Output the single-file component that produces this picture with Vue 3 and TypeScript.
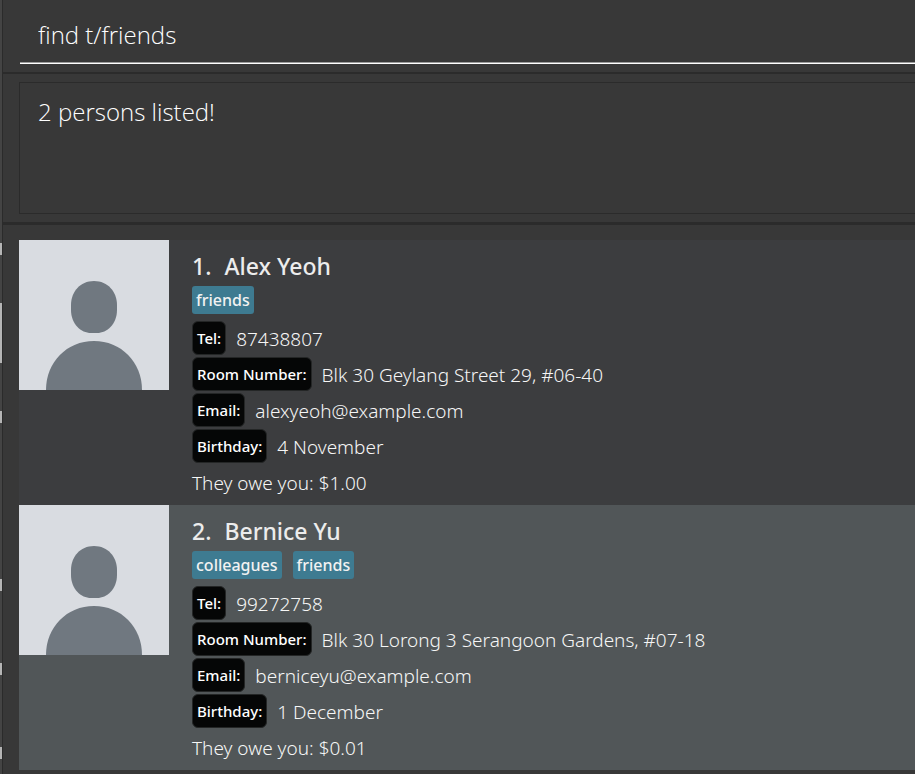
<script setup lang="ts">
import { ref } from 'vue'

interface Field {
  label: string
  value: string
}

interface Person {
  name: string
  tags: string[]
  fields: Field[]
  debt: string
}

const command = ref('find t/friends')
const result = '2 persons listed!'

const persons: Person[] = [
  {
    name: 'Alex Yeoh',
    tags: ['friends'],
    fields: [
      { label: 'Tel:', value: '87438807' },
      { label: 'Room Number:', value: 'Blk 30 Geylang Street 29, #06-40' },
      { label: 'Email:', value: 'alexyeoh@example.com' },
      { label: 'Birthday:', value: '4 November' },
    ],
    debt: 'They owe you: $1.00',
  },
  {
    name: 'Bernice Yu',
    tags: ['colleagues', 'friends'],
    fields: [
      { label: 'Tel:', value: '99272758' },
      { label: 'Room Number:', value: 'Blk 30 Lorong 3 Serangoon Gardens, #07-18' },
      { label: 'Email:', value: 'berniceyu@example.com' },
      { label: 'Birthday:', value: '1 December' },
    ],
    debt: 'They owe you: $0.01',
  },
]

// Marks visible in the edge of the neighbouring pane: space above and length.
const marks = [
  { gap: 243, size: 12 },
  { gap: 48, size: 60 },
  { gap: 48, size: 12 },
  { gap: 156, size: 12 },
  { gap: 72, size: 12 },
  { gap: 72, size: 12 },
]
</script>

<template>
  <div class="window">
    <div class="edge" aria-hidden="true">
      <i v-for="(m, i) in marks" :key="i" :style="{ marginTop: m.gap + 'px', height: m.size + 'px' }"></i>
    </div>
    <main class="main">
      <form class="command" @submit.prevent>
        <input v-model="command" type="text" aria-label="Command" spellcheck="false" autocomplete="off" />
      </form>
      <section class="result">
        <output class="result-box">{{ result }}</output>
      </section>
      <ol class="list">
        <li v-for="(p, i) in persons" :key="p.name" class="card">
          <svg class="avatar" viewBox="0 0 150 150" aria-hidden="true">
            <rect width="150" height="150" fill="#d9dce1" />
            <path d="M75 41C89 41 98 52 98 65V70C98 84 88 93 78 93H72C62 93 52 84 52 70V65C52 52 61 41 75 41Z" fill="#707880" />
            <path d="M27 150C27 122 48 101 75 101S123 122 123 150Z" fill="#707880" />
          </svg>
          <div class="info">
            <h2 class="name"><span>{{ i + 1 }}.</span><span>{{ p.name }}</span></h2>
            <div class="tags">
              <span v-for="t in p.tags" :key="t" class="tag">{{ t }}</span>
            </div>
            <dl class="fields">
              <div v-for="f in p.fields" :key="f.label" class="field">
                <dt>{{ f.label }}</dt>
                <dd>{{ f.value }}</dd>
              </div>
            </dl>
            <p class="debt">{{ p.debt }}</p>
          </div>
        </li>
      </ol>
    </main>
  </div>
</template>

<style>
body {
  margin: 0;
  background: #383838;
}
</style>

<style scoped>
* {
  box-sizing: border-box;
}
.window {
  display: flex;
  min-height: 100vh;
  background: #383838;
  color: #ececec;
  font-family: "Noto Sans", "Open Sans", sans-serif;
  overflow: hidden;
}
.edge {
  width: 2px;
  flex: none;
  background: #444444;
}
.edge i {
  display: block;
  background: #b5b5b5;
}
.main {
  flex: 1;
  min-width: 0;
  border-left: 1px solid #2b2b2b;
}
.command {
  height: 74px;
  padding: 7px 0 8px 17px;
  border-bottom: 2px solid #2b2b2b;
}
.command input {
  display: block;
  width: 100%;
  height: 57px;
  padding: 0 18px 1px;
  border: 0;
  border-bottom: 1px solid #ffffff;
  border-radius: 0;
  outline: 0;
  background: transparent;
  box-shadow: inset 0 -1px #9c9c9c;
  color: #ffffff;
  font: 300 24px/32px "Open Sans", "Noto Sans", sans-serif;
}
.result {
  padding: 8px 0 8px 16px;
  border-bottom: 3px solid #2b2b2b;
}
.result-box {
  display: block;
  min-height: 132px;
  padding: 13px 18px;
  border: 1px solid #2b2b2b;
  border-right: 0;
  color: #ffffff;
  font-family: "Open Sans", "Noto Sans", sans-serif;
  font-weight: 300;
  font-size: 24px;
  line-height: 32px;
}
.list {
  margin: 0;
  padding: 15px 0 4px 16px;
  list-style: none;
}
.card {
  display: flex;
  align-items: flex-start;
  gap: 23px;
  padding-bottom: 4px;
  background: #3c3d3f;
}
.card:nth-child(even) {
  background: #515658;
}
.avatar {
  width: 150px;
  height: 150px;
  flex: none;
}
.info {
  min-width: 0;
}
.name {
  display: flex;
  gap: 13px;
  margin: 0;
  padding: 9px 0 1px;
  font-weight: 500;
  font-size: 23px;
  line-height: 34px;
}
.tags {
  display: flex;
  gap: 11px;
  padding: 2px 0 6px;
}
.tag {
  padding: 0 4px;
  border-radius: 3px;
  background: #3e7b91;
  color: #f2f2f2;
  font-weight: 500;
  font-size: 16px;
  line-height: 28px;
}
.fields {
  margin: 0;
}
.field {
  display: flex;
  align-items: center;
  gap: 10px;
  height: 36px;
}
dt {
  padding: 0 4px;
  border: 1px solid #242626;
  border-radius: 6px;
  background: #050606;
  color: #ffffff;
  font-weight: 500;
  font-size: 15px;
  line-height: 32px;
}
dd {
  margin: 0;
  padding-top: 2px;
  color: #f6f6f6;
  font-weight: 300;
  font-size: 19px;
}
.debt {
  margin: 0;
  padding-top: 1px;
  color: #f6f6f6;
  font-weight: 300;
  font-size: 19px;
  line-height: 36px;
}
</style>
